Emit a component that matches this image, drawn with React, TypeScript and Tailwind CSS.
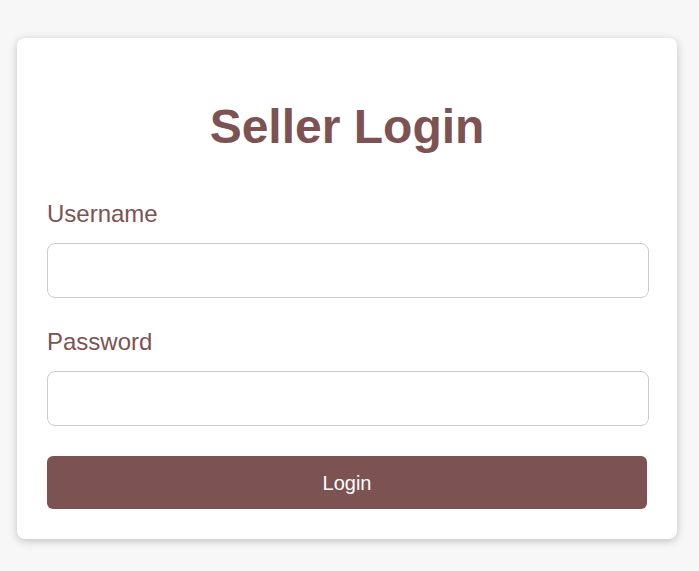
import React from 'react';

const App = () => {
  return (
    <div className="min-h-[571px] w-full bg-[#f7f7f7] pt-[38px] pl-[17px]" style={{ fontFamily: '"Liberation Sans", Arial, sans-serif' }}>
      <div className="w-[660px] rounded-lg bg-white px-[30px] pt-[30px] pb-[30px] shadow-[0_2px_8px_rgba(0,0,0,0.22)]">
        <h2 className="mt-[31px] text-center text-[48px] font-bold leading-[56px] text-[#7d5252]">Seller Login</h2>

        <form className="flex flex-col" onSubmit={(e) => e.preventDefault()}>
          <label className="mt-[45px] text-[24px] leading-[28px] text-[#7d5252]">Username</label>
          <input
            type="text"
            className="mt-[15px] h-[55px] w-[602px] rounded-lg border border-[#cccccc] px-3 text-[18px] outline-none"
          />

          <label className="mt-[30px] text-[24px] leading-[28px] text-[#7d5252]">Password</label>
          <input
            type="password"
            className="mt-[15px] h-[55px] w-[602px] rounded-lg border border-[#cccccc] px-3 text-[18px] outline-none"
          />

          <button
            type="submit"
            className="mt-[30px] h-[53px] w-[600px] rounded-md bg-[#7d5252] text-[20px] text-white"
          >
            Login
          </button>
        </form>
      </div>
    </div>
  );
};

export default App;
